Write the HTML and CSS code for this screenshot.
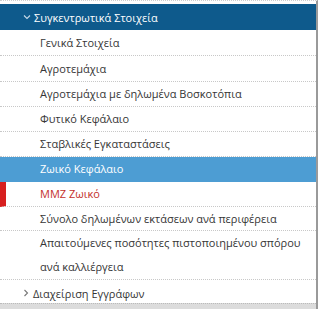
FILE: index.html
```html
<!DOCTYPE html>
<html lang="el">
<head>
<meta charset="utf-8">
<link rel="stylesheet" href="styles.css">
</head>
<body>
<div class="panel">
  <ul class="menu">
    <li class="group open">
      <div class="head"><svg class="chev" width="8" height="8" viewBox="0 0 8 8"><path d="M1 2.5 L4 5.5 L7 2.5" fill="none" stroke="currentColor" stroke-width="1.1"/></svg><span>Συγκεντρωτικά Στοιχεία</span></div>
      <ul class="sub">
        <li>Γενικά Στοιχεία</li>
        <li>Αγροτεμάχια</li>
        <li>Αγροτεμάχια με δηλωμένα Βοσκοτόπια</li>
        <li>Φυτικό Κεφάλαιο</li>
        <li>Σταβλικές Εγκαταστάσεις</li>
        <li class="active">Ζωικό Κεφάλαιο</li>
        <li class="flag">ΜΜΖ Ζωικό</li>
        <li class="short">Σύνολο δηλωμένων εκτάσεων ανά περιφέρεια</li>
        <li class="wrap">Απαιτούμενες ποσότητες πιστοποιημένου σπόρου ανά καλλιέργεια</li>
      </ul>
    </li>
    <li class="group">
      <div class="head closed"><svg class="chev" width="8" height="8" viewBox="0 0 8 8"><path d="M2.5 1 L5.5 4 L2.5 7" fill="none" stroke="currentColor" stroke-width="1.1"/></svg><span>Διαχείριση Εγγράφων</span></div>
    </li>
  </ul>
  <div class="footer"></div>
</div>
</body>
</html>
```
FILE: styles.css
```css
html, body {
  margin: 0;
  padding: 0;
  background: #ffffff;
}
body {
  font-family: "Open Sans", "Noto Sans", sans-serif;
  font-size: 11px;
  color: #363636;
}
.panel {
  width: 318px;
  height: 309px;
  border-right: 2px solid #9a9a9a;
  padding-top: 3px;
  box-sizing: border-box;
  border-top: 1px dotted #cfcfcf;
  position: relative;
  overflow: hidden;
}
.menu, .sub {
  list-style: none;
  margin: 0;
  padding: 0;
}
.head {
  display: flex;
  align-items: center;
  height: 26px;
  padding-left: 23px;
  gap: 3px;
  background: #0e5a8c;
  color: #ffffff;
  font-size: 11px;
}
.head .chev {
  color: #c7d9e8;
}
.head.closed {
  background: #ffffff;
  color: #363636;
  border-top: 1px dotted #c8c8c8;
  height: 26px;
  padding-left: 22px;
}
.head.closed .chev {
  color: #777777;
}
.sub li {
  padding: 0 6px 0 40px;
  line-height: 24px;
  border-bottom: 1px dotted #c8c8c8;
}
.sub li:first-child,
.sub li:nth-child(2) {
  line-height: 25px;
}
.sub li.active {
  background: #4d9dd3;
  color: #ffffff;
  border-bottom-color: #4d9dd3;
}
.sub li.flag {
  color: #c4302b;
  border-left: 6px solid #d71f1f;
  padding-left: 34px;
}
.sub li.short {
  line-height: 23px;
}
.sub li.wrap {
  line-height: 24px;
  border-bottom: none;
}
.footer {
  position: absolute;
  left: 0;
  right: 0;
  bottom: 0;
  height: 5px;
  background: #dcdcdc;
  border-top: 1px dotted #bbbbbb;
}
```
